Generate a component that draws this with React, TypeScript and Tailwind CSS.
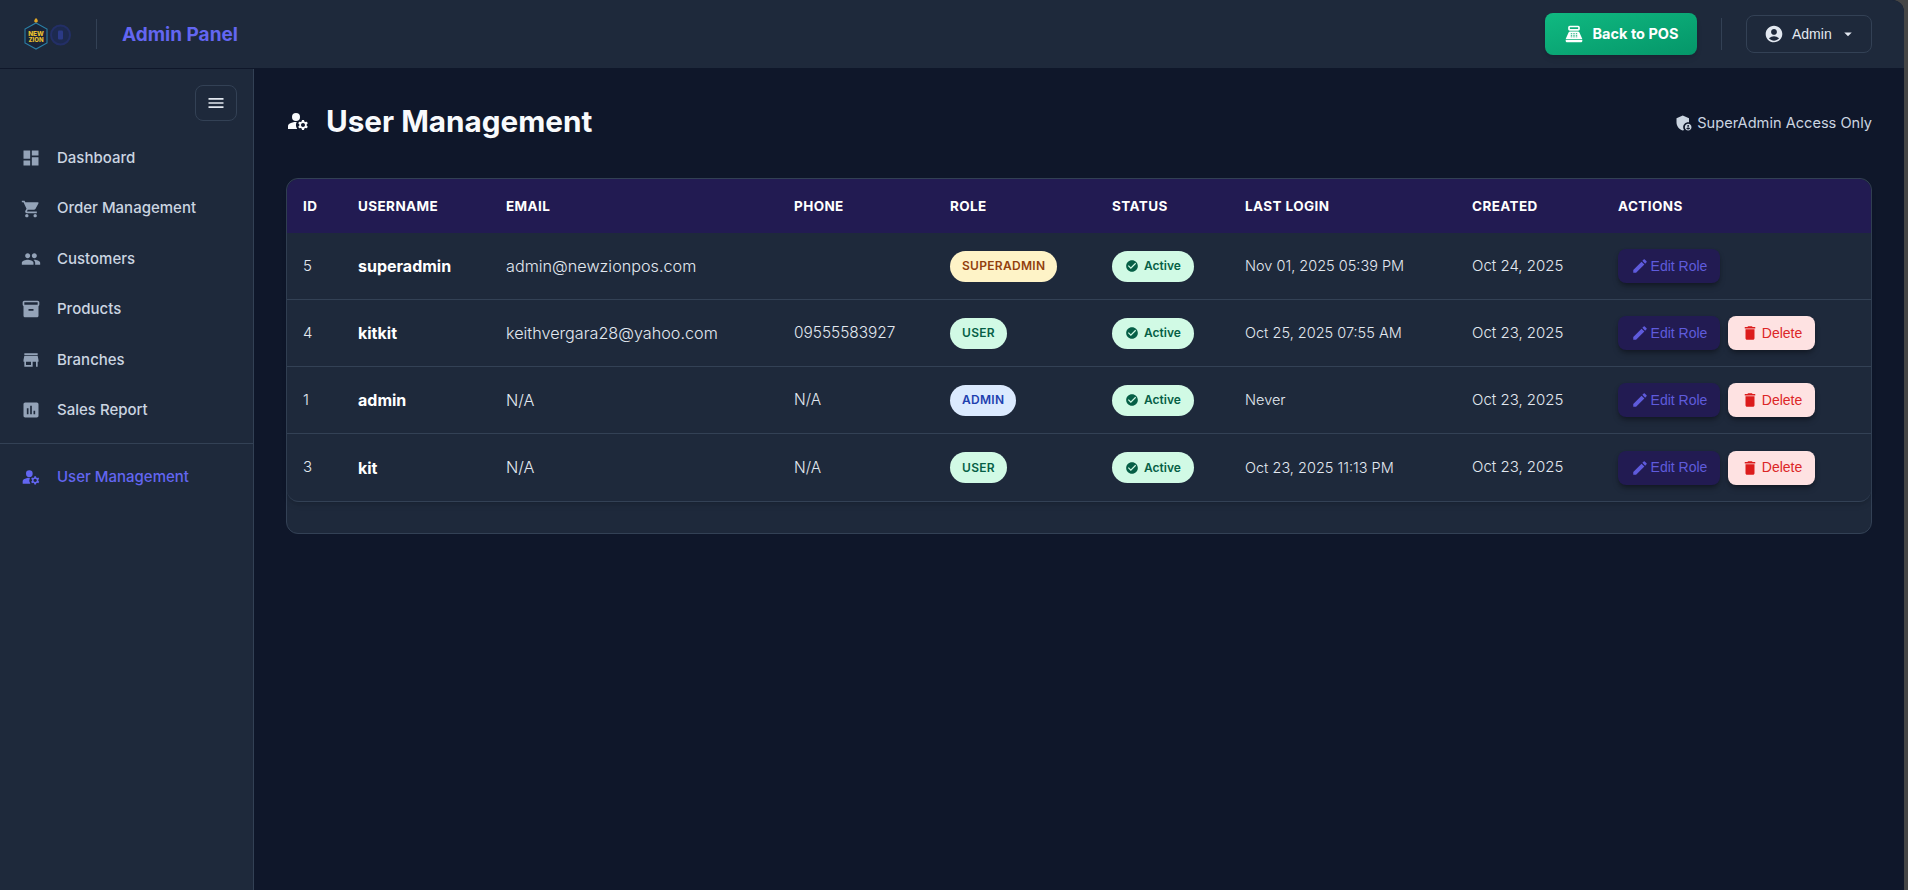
import {
  MdDashboard,
  MdShoppingCart,
  MdPeople,
  MdInventory2,
  MdStore,
  MdAssessment,
  MdManageAccounts,
  MdPointOfSale,
  MdAccountCircle,
  MdArrowDropDown,
  MdEdit,
  MdDelete,
  MdCheckCircle,
  MdMenu,
  MdAdminPanelSettings,
} from 'react-icons/md'

const navItems = [
  { label: 'Dashboard', icon: MdDashboard },
  { label: 'Order Management', icon: MdShoppingCart },
  { label: 'Customers', icon: MdPeople },
  { label: 'Products', icon: MdInventory2 },
  { label: 'Branches', icon: MdStore },
  { label: 'Sales Report', icon: MdAssessment },
]

const roleClass: Record<string, string> = {
  SUPERADMIN: 'bg-[#fef3c7] text-[#92400e]',
  USER: 'bg-[#d1fae5] text-[#065f46]',
  ADMIN: 'bg-[#dbeafe] text-[#1e40af]',
}

const users = [
  { id: 5, username: 'superadmin', email: 'admin@newzionpos.com', phone: '', role: 'SUPERADMIN', lastLogin: 'Nov 01, 2025 05:39 PM', created: 'Oct 24, 2025', canDelete: false },
  { id: 4, username: 'kitkit', email: 'keithvergara28@yahoo.com', phone: '09555583927', role: 'USER', lastLogin: 'Oct 25, 2025 07:55 AM', created: 'Oct 23, 2025', canDelete: true },
  { id: 1, username: 'admin', email: 'N/A', phone: 'N/A', role: 'ADMIN', lastLogin: 'Never', created: 'Oct 23, 2025', canDelete: true },
  { id: 3, username: 'kit', email: 'N/A', phone: 'N/A', role: 'USER', lastLogin: 'Oct 23, 2025 11:13 PM', created: 'Oct 23, 2025', canDelete: true },
]

const columns = [
  { label: 'ID', width: 'w-[55px]' },
  { label: 'USERNAME', width: 'w-[148px]' },
  { label: 'EMAIL', width: 'w-[288px]' },
  { label: 'PHONE', width: 'w-[156px]' },
  { label: 'ROLE', width: 'w-[162px]' },
  { label: 'STATUS', width: 'w-[133px]' },
  { label: 'LAST LOGIN', width: 'w-[227px]' },
  { label: 'CREATED', width: 'w-[146px]' },
  { label: 'ACTIONS', width: 'w-[269px]' },
]

function Logo() {
  return (
    <svg width="49" height="34" viewBox="0 0 49 34" className="shrink-0">
      <path d="M12 6 L23 12 L23 26 L12 32 L1 26 L1 12 Z" fill="#1a2438" stroke="#2a7fa5" strokeWidth="1.1" />
      <path d="M12 1 C13.6 2.6 14 3.6 13.7 4.6 C13.2 5.9 10.8 5.9 10.3 4.6 C10 3.6 10.6 2.6 12 1 Z" fill="#e0a526" />
      <text x="12" y="18.5" textAnchor="middle" fontSize="6.4" fontWeight="800" fill="#e8c02e" fontFamily="Inter, sans-serif">NEW</text>
      <text x="12" y="25" textAnchor="middle" fontSize="6" fontWeight="800" fill="#e8c02e" fontFamily="Inter, sans-serif">ZION</text>
      <circle cx="36.5" cy="18" r="9.5" fill="#1d2a4f" stroke="#232f66" strokeWidth="2" />
      <rect x="34" y="13.5" width="5" height="9" rx="1" fill="#2b3a86" />
    </svg>
  )
}

function Header() {
  return (
    <header className="h-[69px] shrink-0 flex items-center justify-between bg-[#1e293b] border-b border-[#0f172a] rounded-tr-[12px] pl-[24px] pr-[32px]">
      <div className="flex items-center">
        <Logo />
        <div className="w-px h-[30px] bg-[#334155] ml-[23px]" />
        <span className="ml-[25px] text-[19px] font-bold text-[#6366f1] leading-none">Admin Panel</span>
      </div>
      <div className="flex items-center">
        <button className="w-[152px] h-[42px] flex items-center justify-center gap-[9px] rounded-[8px] bg-gradient-to-br from-[#10b981] to-[#059669] text-white text-[14.5px] font-bold shadow-md">
          <MdPointOfSale size={20} />
          Back to POS
        </button>
        <div className="w-px h-[32px] bg-[#334155] mx-[24px]" />
        <button className="w-[126px] h-[38px] flex items-center pl-[17px] rounded-[8px] border border-[#334155] text-[#e2e8f0] text-[14px] font-['Liberation_Sans',sans-serif]">
          <MdAccountCircle size={20} />
          <span className="ml-[8px]">Admin</span>
          <MdArrowDropDown size={18} className="ml-[7px]" />
        </button>
      </div>
    </header>
  )
}

function Sidebar() {
  return (
    <aside className="w-[254px] shrink-0 bg-[#1e293b] border-r border-[#334155] flex flex-col">
      <div className="flex justify-end pt-[16px] pr-[16px]">
        <button className="w-[42px] h-[36px] flex items-center justify-center rounded-[8px] border border-[#334155] text-[#e2e8f0]">
          <MdMenu size={20} />
        </button>
      </div>
      <nav className="mt-[12px] flex flex-col">
        {navItems.map((item) => (
          <a key={item.label} className="h-[50.4px] flex items-center pl-[21px] gap-[16px] text-[#cbd5e1] text-[15px] font-medium">
            <item.icon size={20} className="text-[#94a3b8]" />
            {item.label}
          </a>
        ))}
      </nav>
      <div className="h-px bg-[#334155] mt-[8px]" />
      <a className="h-[50px] mt-[8px] flex items-center pl-[21px] gap-[16px] text-[#6366f1] text-[15px] font-medium">
        <MdManageAccounts size={20} />
        User Management
      </a>
    </aside>
  )
}

function UserRow({ user, last }: { user: (typeof users)[number]; last: boolean }) {
  const cell = `pl-[16px] ${last ? '' : 'border-b border-[#334155]'}`
  return (
    <tr className="h-[67px] text-[#e2e8f0] font-light">
      <td className={`${cell} text-[15px]`}>{user.id}</td>
      <td className={`${cell} text-[16px] font-bold text-white`}>{user.username}</td>
      <td className={`${cell} text-[16.2px]`}>{user.email}</td>
      <td className={`${cell} text-[15.4px]`}>{user.phone}</td>
      <td className={cell}>
        <span className={`inline-flex items-center h-[31px] px-[12px] rounded-full text-[12px] font-semibold tracking-[0.3px] ${roleClass[user.role]}`}>
          {user.role}
        </span>
      </td>
      <td className={cell}>
        <span className="inline-flex items-center gap-[5px] h-[31px] px-[13px] rounded-full bg-[#d1fae5] text-[#065f46] text-[12px] font-semibold">
          <MdCheckCircle size={14} />
          Active
        </span>
      </td>
      <td className={`${cell} text-[14.5px]`}>{user.lastLogin}</td>
      <td className={`${cell} text-[15px]`}>{user.created}</td>
      <td className={cell}>
        <div className="flex gap-[8px] font-['Liberation_Sans',sans-serif] text-[14px] font-normal">
          <button className="w-[102px] h-[34px] flex items-center justify-center gap-[2px] rounded-[8px] bg-[#221b52] text-[#5f5bdc] shadow-md shadow-black/30">
            <MdEdit size={18} />
            Edit Role
          </button>
          {user.canDelete && (
            <button className="w-[87px] h-[34px] flex items-center justify-center gap-[3px] rounded-[8px] bg-[#fee2e2] text-[#dc2626] shadow-md shadow-black/30">
              <MdDelete size={18} className="text-[#dc1c1c]" />
              Delete
            </button>
          )}
        </div>
      </td>
    </tr>
  )
}

export default function App() {
  return (
    <div className="h-[890px] flex bg-[#454545] overflow-hidden font-['Inter',sans-serif]">
      <div className="flex-1 min-w-0 flex flex-col bg-[#0f172a] rounded-tr-[12px]">
        <Header />
        <div className="flex-1 flex min-h-0">
          <Sidebar />
          <main className="flex-1 min-w-0 pl-[32px] pr-[32px]">
            <div className="h-[109px] flex items-center justify-between">
              <div className="flex items-center mb-[4px]">
                <MdManageAccounts size={24} className="text-[#f8fafc]" />
                <h1 className="ml-[16px] text-[29.7px] font-bold text-[#f8fafc] leading-none">User Management</h1>
              </div>
              <div className="flex items-center gap-[3px] text-[14.6px] text-[#cbd5e1]">
                <MdAdminPanelSettings size={20} />
                SuperAdmin Access Only
              </div>
            </div>
            <div className="h-[356px] rounded-[12px] border border-[#334155] bg-[#1e293b]">
              <table className="w-full table-fixed border-separate border-spacing-0 overflow-hidden rounded-[12px] border-b border-[#334155] shadow-md">
                <thead>
                  <tr className="h-[54px] bg-[#221b52]">
                    {columns.map((col) => (
                      <th key={col.label} className={`${col.width} pl-[16px] text-left text-[13.5px] font-bold text-white tracking-[0.4px]`}>
                        {col.label}
                      </th>
                    ))}
                  </tr>
                </thead>
                <tbody>
                  {users.map((user, i) => (
                    <UserRow key={user.id} user={user} last={i === users.length - 1} />
                  ))}
                </tbody>
              </table>
            </div>
          </main>
        </div>
      </div>
      <div className="w-[4px] shrink-0" />
    </div>
  )
}
